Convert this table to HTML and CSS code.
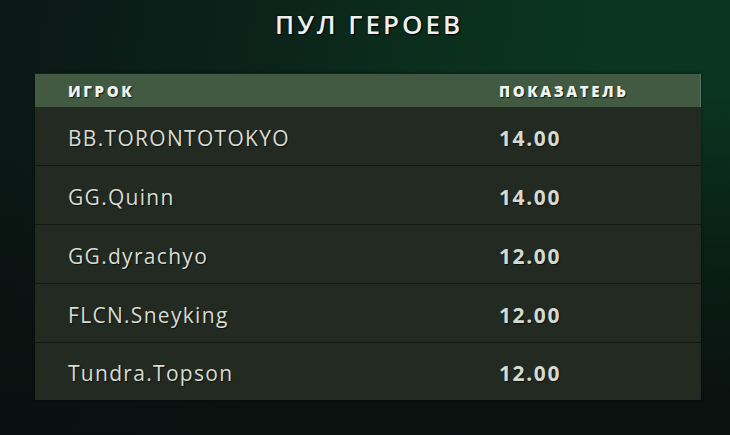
FILE: index.html
```html
<!DOCTYPE html>
<html lang="ru">
<head>
<meta charset="utf-8">
<title>Пул героев</title>
<link rel="stylesheet" href="styles.css">
</head>
<body>
<main class="page">
  <h1 class="title">ПУЛ ГЕРОЕВ</h1>
  <section class="table">
    <div class="row head">
      <span class="col-name">ИГРОК</span>
      <span class="col-val">ПОКАЗАТЕЛЬ</span>
    </div>
    <div class="row">
      <span class="col-name">BB.TORONTOTOKYO</span>
      <span class="col-val">14.00</span>
    </div>
    <div class="row">
      <span class="col-name">GG.Quinn</span>
      <span class="col-val">14.00</span>
    </div>
    <div class="row">
      <span class="col-name">GG.dyrachyo</span>
      <span class="col-val">12.00</span>
    </div>
    <div class="row">
      <span class="col-name">FLCN.Sneyking</span>
      <span class="col-val">12.00</span>
    </div>
    <div class="row">
      <span class="col-name">Tundra.Topson</span>
      <span class="col-val">12.00</span>
    </div>
  </section>
</main>
</body>
</html>
```
FILE: styles.css
```css
html, body {
  margin: 0;
  padding: 0;
}
body {
  width: 730px;
  height: 435px;
  overflow: hidden;
  font-family: "Open Sans", "Noto Sans", sans-serif;
  background-color: #0a1311;
  background-image:
    linear-gradient(180deg, rgba(9, 16, 14, 0) 0%, rgba(9, 16, 14, 0) 22%, rgba(9, 16, 14, 0.55) 55%, rgba(10, 16, 15, 0.95) 92%),
    linear-gradient(100deg, #0b1816 0%, #0b2119 30%, #0b2f1e 55%, #0a3620 78%, #0a3420 100%);
}
.page {
  display: flex;
  flex-direction: column;
  align-items: flex-start;
  padding: 0 29px 0 35px;
}
.title {
  align-self: center;
  margin: 8px 0 0 2px;
  height: 65px;
  font-size: 26px;
  line-height: 32px;
  font-weight: 600;
  letter-spacing: 3px;
  color: #eef0ee;
  text-shadow: 1px 1px 1px #000, 0 0 2px rgba(0,0,0,0.8);
}
.table {
  width: 666px;
  display: flex;
  flex-direction: column;
  background: #232a22;
  box-shadow: 0 0 2px rgba(0,0,0,0.6);
}
.row {
  display: flex;
  align-items: center;
  height: 55px;
  padding-top: 3px;
  border-bottom: 1px solid #141a13;
  box-sizing: content-box;
}
.row:last-child {
  border-bottom: none;
  height: 54px;
}
.row.head {
  height: 33px;
  padding-top: 0;
  border-top: 1px solid #1a2119;
  border-bottom: none;
  background: #435a42;
  border-right: 1px solid #5d735b;
}
.col-name {
  width: 431px;
  padding-left: 33px;
  font-size: 21px;
  letter-spacing: 1.3px;
  color: #d6dcd3;
  text-shadow: 1px 1px 1px rgba(0,0,0,0.6);
}
.col-val {
  font-size: 21px;
  font-weight: 700;
  letter-spacing: 1.6px;
  color: #d3dad0;
  text-shadow: 1px 1px 1px rgba(0,0,0,0.6);
}
.head .col-name,
.head .col-val {
  font-size: 15px;
  font-weight: 800;
  letter-spacing: 2.6px;
  color: #f1f3ef;
  text-shadow: 1px 1px 1px rgba(0,0,0,0.7);
}
```
